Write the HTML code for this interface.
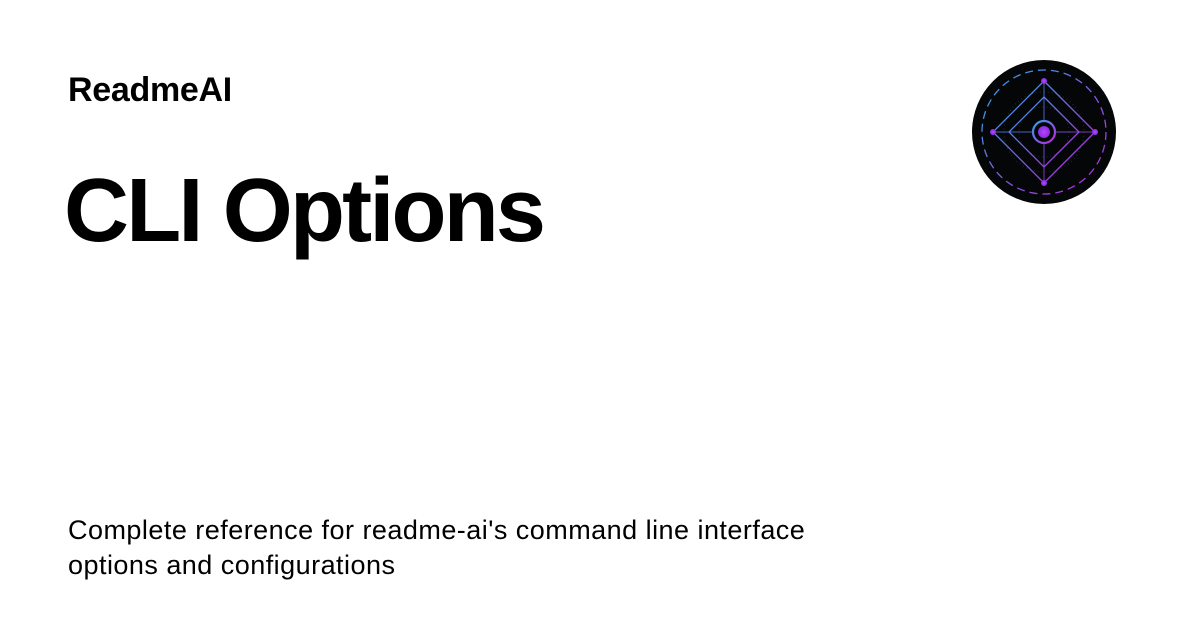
<!DOCTYPE html>
<html><head><meta charset="utf-8"><style>
html,body{margin:0;padding:0;background:#fff;}
body{width:1200px;height:630px;position:relative;overflow:hidden;font-family:"Liberation Sans",sans-serif;color:#000;}
.brand{position:absolute;left:68px;top:71px;font-size:34px;font-weight:bold;letter-spacing:-0.3px;}
.title{position:absolute;left:64px;top:156px;font-size:90px;font-weight:bold;letter-spacing:-2.8px;line-height:110px;}
.sub{position:absolute;left:68px;top:513px;font-size:27px;line-height:35px;letter-spacing:0.47px;}
svg{position:absolute;left:972px;top:60px;}
</style></head><body>
<div class="brand">ReadmeAI</div>
<div class="title">CLI Options</div>
<div class="sub">Complete reference for readme-ai's command line interface<br>options and configurations</div>
<svg width="144" height="144" viewBox="0 0 144 144">
<defs>
<linearGradient id="g" x1="0" y1="0" x2="1" y2="1"><stop offset="0" stop-color="#2aa8e8"/><stop offset="1" stop-color="#c21fe0"/></linearGradient>
<radialGradient id="d"><stop offset="0" stop-color="#c040ff"/><stop offset="1" stop-color="#8030e0"/></radialGradient>
</defs>
<circle cx="72" cy="72" r="72" fill="#050608"/>
<circle cx="72" cy="72" r="62" fill="none" stroke="url(#g)" stroke-width="1.3" stroke-dasharray="8 5"/>
<circle cx="72" cy="72" r="40" fill="none" stroke="#1e3a4a" stroke-width="0.8" stroke-dasharray="1 3"/>
<circle cx="72" cy="72" r="25" fill="none" stroke="#1e3a4a" stroke-width="0.8" stroke-dasharray="1 3"/>
<path d="M72 21 L123 72 L72 123 L21 72 Z" fill="none" stroke="url(#g)" stroke-width="1.3"/>
<path d="M72 37 L107 72 L72 107 L37 72 Z" fill="none" stroke="url(#g)" stroke-width="1.3"/>
<path d="M72 21 V123 M21 72 H123" stroke="url(#g)" stroke-width="1" opacity="0.8"/>
<circle cx="72" cy="72" r="11" fill="#050608" stroke="url(#g)" stroke-width="2.2"/>
<circle cx="72" cy="72" r="6" fill="url(#d)"/>
<circle cx="72" cy="21" r="3" fill="url(#d)"/><circle cx="72" cy="123" r="3" fill="url(#d)"/>
<circle cx="21" cy="72" r="3" fill="url(#d)"/><circle cx="123" cy="72" r="3" fill="url(#d)"/>
</svg>
</body></html>
